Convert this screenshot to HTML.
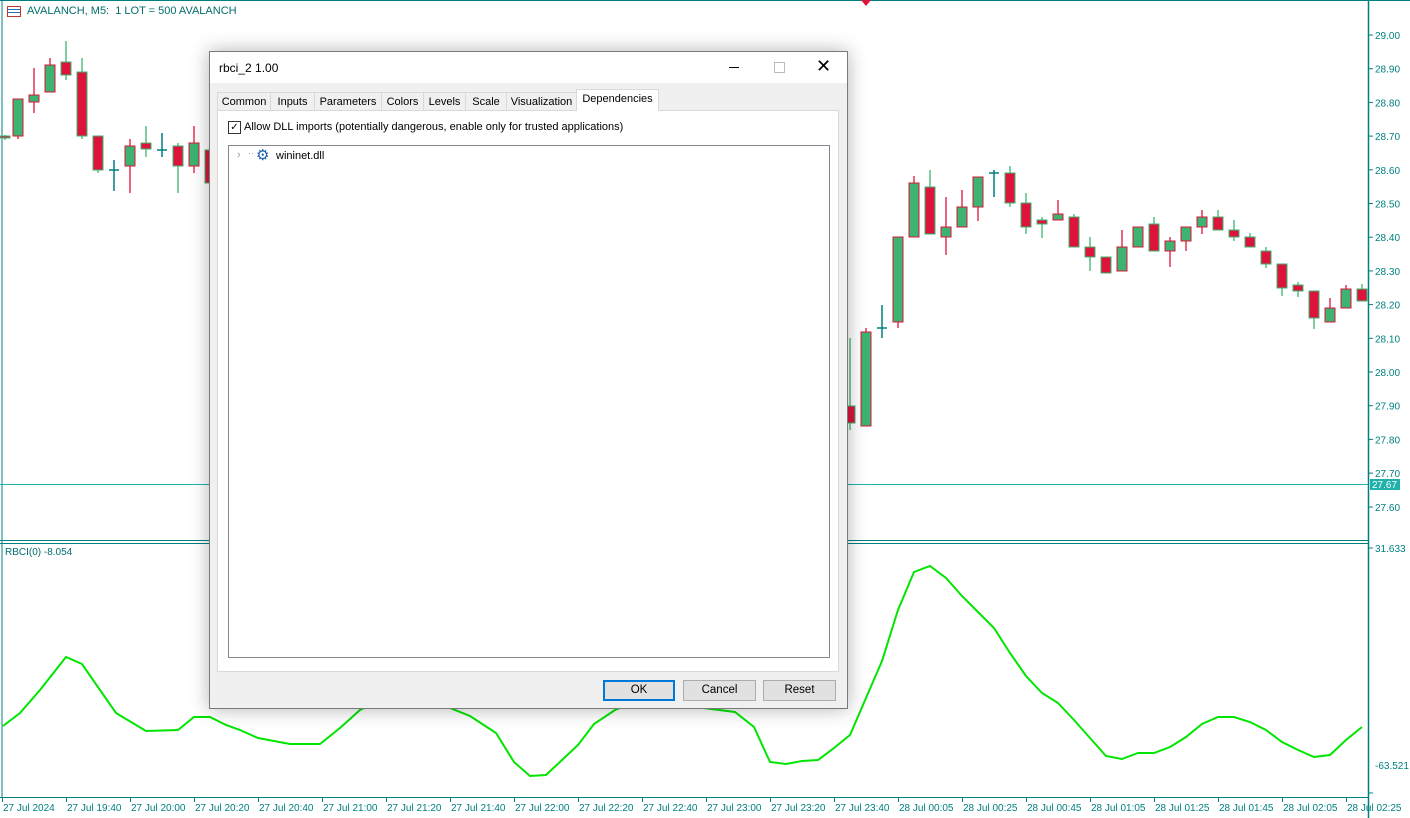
<!DOCTYPE html>
<html><head><meta charset="utf-8"><style>
body{margin:0;width:1410px;height:818px;overflow:hidden;background:#fff;font-family:"Liberation Sans",sans-serif;position:relative}
svg{position:absolute;left:0;top:0}
.dlg{position:absolute;left:209px;top:51px;width:637px;height:656px;background:#f0f0f0;border:1px solid #7a7a7a;box-shadow:0 0 18px rgba(0,0,0,.3);font-size:11px;color:#000}
.tb{position:absolute;left:0;top:0;width:637px;height:31px;background:#fff}
.tab{position:absolute;top:40px;height:18px;line-height:18px;border:1px solid #d9d9d9;border-bottom:none;background:#f0f0f0;text-align:center;font-size:11px}
.panel{position:absolute;left:7px;top:58px;width:620px;height:560px;background:#fff;border:1px solid #d9d9d9}
.btn{position:absolute;top:628px;height:19px;line-height:19px;border:1px solid #adadad;background:#e1e1e1;text-align:center;font-size:11.5px}
</style></head><body>
<svg id="s" width="1410" height="818"></svg>
<div style="position:absolute;left:7px;top:6px;width:14px;height:11px;border:1px solid #c0392b;box-sizing:border-box;background:linear-gradient(#fff 0 2px,#2a6ebb 2px 3px,#fff 3px 5px,#2a6ebb 5px 6px,#fff 6px)"></div>
<div style="position:absolute;left:27px;top:5px;font-size:11px;color:#006d6d">AVALANCH, M5:&nbsp; 1 LOT = 500 AVALANCH</div>
<div style="position:absolute;left:5px;top:547px;font-size:10px;color:#006d6d">RBCI(0) -8.054</div>
<div class="dlg">
 <div class="tb"><span style="position:absolute;left:9px;top:9px;font-size:12px">rbci_2 1.00</span>
 <span style="position:absolute;left:519px;top:15px;width:10px;height:1px;background:#000"></span>
 <span style="position:absolute;left:564px;top:10px;width:9px;height:9px;border:1px solid #bbb"></span>
 <span style="position:absolute;left:606px;top:4px;font-size:18px">✕</span></div>
 <div class="tab" style="left:7px;width:52px">Common</div>
 <div class="tab" style="left:60px;width:43px">Inputs</div>
 <div class="tab" style="left:104px;width:66px">Parameters</div>
 <div class="tab" style="left:171px;width:41px">Colors</div>
 <div class="tab" style="left:213px;width:41px">Levels</div>
 <div class="tab" style="left:255px;width:40px">Scale</div>
 <div class="tab" style="left:296px;width:69px">Visualization</div>
 <div class="tab" style="left:366px;top:37px;height:21px;width:81px;background:#fff;z-index:2">Dependencies</div>
 <div class="panel">
  <div style="position:absolute;left:10px;top:10px;width:11px;height:11px;border:1px solid #333;font-size:10px;line-height:11px;text-align:center">✓</div>
  <div style="position:absolute;left:26px;top:10px">Allow DLL imports (potentially dangerous, enable only for trusted applications)</div>
  <div style="position:absolute;left:10px;top:34px;width:600px;height:511px;border:1px solid #828790">
   <span style="position:absolute;left:8px;top:3px;color:#999">›</span>
   <span style="position:absolute;left:19px;top:2px;color:#999;font-size:9px">··</span>
   <span style="position:absolute;left:27px;top:0px;color:#1a5fa8;font-size:15px">⚙</span>
   <span style="position:absolute;left:47px;top:4px">wininet.dll</span>
  </div>
 </div>
 <div class="btn" style="left:393px;width:68px;border:2px solid #0078d7;height:17px;line-height:17px">OK</div>
 <div class="btn" style="left:473px;width:71px">Cancel</div>
 <div class="btn" style="left:553px;width:71px">Reset</div>
</div>
<script>
var s='',T='#008080',G='#3cb371',R='#dc143c';
s+='<line x1="2" y1="0" x2="2" y2="797" stroke="'+T+'"/><line x1="0" y1="0.5" x2="1410" y2="0.5" stroke="'+T+'"/>';
s+='<line x1="1368.5" y1="0" x2="1368.5" y2="818" stroke="'+T+'" stroke-width="1.5"/>';
s+='<line x1="0" y1="540.5" x2="1368" y2="540.5" stroke="'+T+'"/><line x1="0" y1="543.5" x2="1368" y2="543.5" stroke="'+T+'"/>';
s+='<line x1="0" y1="797.5" x2="1368" y2="797.5" stroke="'+T+'"/>';
s+='<line x1="0" y1="484.5" x2="1368" y2="484.5" stroke="#20b2aa"/>';
s+='<path d="M861 0l5 6 5-6z" fill="'+R+'"/>';
for(var i=0;i<14;i++){var p=(29-i*0.1).toFixed(2),y=35+i*33.7;s+='<line x1="1368" y1="'+y+'" x2="1373" y2="'+y+'" stroke="'+T+'"/><text x="1375" y="'+(y+4)+'" font-size="10" fill="'+T+'">'+p+'</text>';}
s+='<line x1="1368" y1="507" x2="1373" y2="507" stroke="'+T+'"/><text x="1375" y="511" font-size="10" fill="'+T+'">27.60</text>';
s+='<rect x="1370" y="479" width="30" height="11" fill="#20b2aa"/><text x="1372" y="488" font-size="10" fill="#fff">27.67</text>';
s+='<line x1="1368" y1="548" x2="1373" y2="548" stroke="'+T+'"/><text x="1375" y="552" font-size="10" fill="'+T+'">31.633</text>';
s+='<line x1="1368" y1="793" x2="1373" y2="793" stroke="'+T+'"/><text x="1375" y="769" font-size="10" fill="'+T+'">-63.521</text>';
var L=['27 Jul 2024','27 Jul 19:40','27 Jul 20:00','27 Jul 20:20','27 Jul 20:40','27 Jul 21:00','27 Jul 21:20','27 Jul 21:40','27 Jul 22:00','27 Jul 22:20','27 Jul 22:40','27 Jul 23:00','27 Jul 23:20','27 Jul 23:40','28 Jul 00:05','28 Jul 00:25','28 Jul 00:45','28 Jul 01:05','28 Jul 01:25','28 Jul 01:45','28 Jul 02:05','28 Jul 02:25'];
L.forEach(function(t,i){var x=2+i*64;s+='<line x1="'+(x+0.5)+'" y1="797" x2="'+(x+0.5)+'" y2="802" stroke="'+T+'"/><text x="'+(x+1)+'" y="811" font-size="10" fill="'+T+'">'+t+'</text>';});
var C=[[5,136,138,135,140,'r'],[18,99,136,99,139,'g'],[34,95,102,68,113,'g'],[50,65,92,58,92,'g'],[66,62,75,41,80,'r'],[82,72,136,58,139,'r'],[98,136,170,136,173,'r'],[114,170,170,160,191,'c'],[130,146,166,139,193,'g'],[146,143,149,126,157,'r'],[162,150,150,133,157,'c'],[178,146,166,143,193,'r'],[194,143,166,126,173,'g'],[210,150,183,150,190,'r'],
[850,406,423,338,430,'r'],[866,332,426,328,426,'g'],[882,328,328,305,338,'c'],[898,237,322,237,328,'g'],[914,183,237,176,237,'g'],[930,187,234,170,234,'r'],[946,227,237,197,255,'g'],[962,207,227,190,227,'g'],[978,177,207,177,221,'g'],[994,173,173,170,197,'c'],[1010,173,203,166,207,'r'],[1026,203,227,193,234,'r'],[1042,220,224,217,238,'r'],[1058,214,220,200,220,'g'],[1074,217,247,214,247,'r'],[1090,247,257,237,271,'r'],[1106,257,273,257,273,'r'],[1122,247,271,230,271,'g'],[1138,227,247,227,247,'g'],[1154,224,251,217,251,'r'],[1170,241,251,237,267,'g'],[1186,227,241,227,251,'g'],[1202,217,227,210,234,'g'],[1218,217,230,210,230,'r'],[1234,230,237,220,241,'r'],[1250,237,247,233,247,'r'],[1266,251,264,247,268,'r'],[1282,264,288,264,296,'r'],[1298,285,291,282,297,'r'],[1314,291,318,291,329,'r'],[1330,308,322,298,322,'g'],[1346,289,308,285,308,'g'],[1362,289,301,284,301,'r']];
C.forEach(function(c){var x=c[0],b=c[5];if(b=='c'){s+='<line x1="'+x+'" y1="'+c[3]+'" x2="'+x+'" y2="'+c[4]+'" stroke="'+T+'" stroke-width="1.5"/><line x1="'+(x-5)+'" y1="'+c[1]+'" x2="'+(x+5)+'" y2="'+c[1]+'" stroke="'+T+'" stroke-width="1.5"/>';return;}
var f=b=='g'?G:R,o=b=='g'?R:G;s+='<line x1="'+x+'" y1="'+c[3]+'" x2="'+x+'" y2="'+c[4]+'" stroke="'+o+'" stroke-width="1.3"/><rect x="'+(x-5)+'" y="'+c[1]+'" width="10" height="'+Math.max(2,c[2]-c[1])+'" fill="'+f+'" stroke="'+o+'" stroke-width="1"/>';});
var P=[[3,726],[20,713],[40,690],[66,657],[82,664],[100,690],[116,713],[146,731],[178,730],[194,717],[210,717],[226,725],[240,730],[258,738],[290,744],[320,744],[340,728],[360,710],[380,700],[450,708],[470,716],[496,733],[514,762],[530,776],[546,775],[562,760],[578,745],[594,724],[615,710],[640,700],[735,712],[754,727],[770,762],[786,764],[802,761],[818,760],[834,748],[850,735],[866,698],[882,661],[898,610],[914,572],[930,566],[946,578],[962,596],[978,612],[994,628],[1010,653],[1026,676],[1042,693],[1058,703],[1074,720],[1090,738],[1106,756],[1122,759],[1138,753],[1154,753],[1170,747],[1186,737],[1202,724],[1218,717],[1234,717],[1250,722],[1266,730],[1282,742],[1298,750],[1314,757],[1330,755],[1346,740],[1362,727]];
s+='<polyline fill="none" stroke="#00e600" stroke-width="2" points="'+P.map(function(p){return p.join(',')}).join(' ')+'"/>';
document.getElementById('s').innerHTML=s;
</script>
</body></html>
